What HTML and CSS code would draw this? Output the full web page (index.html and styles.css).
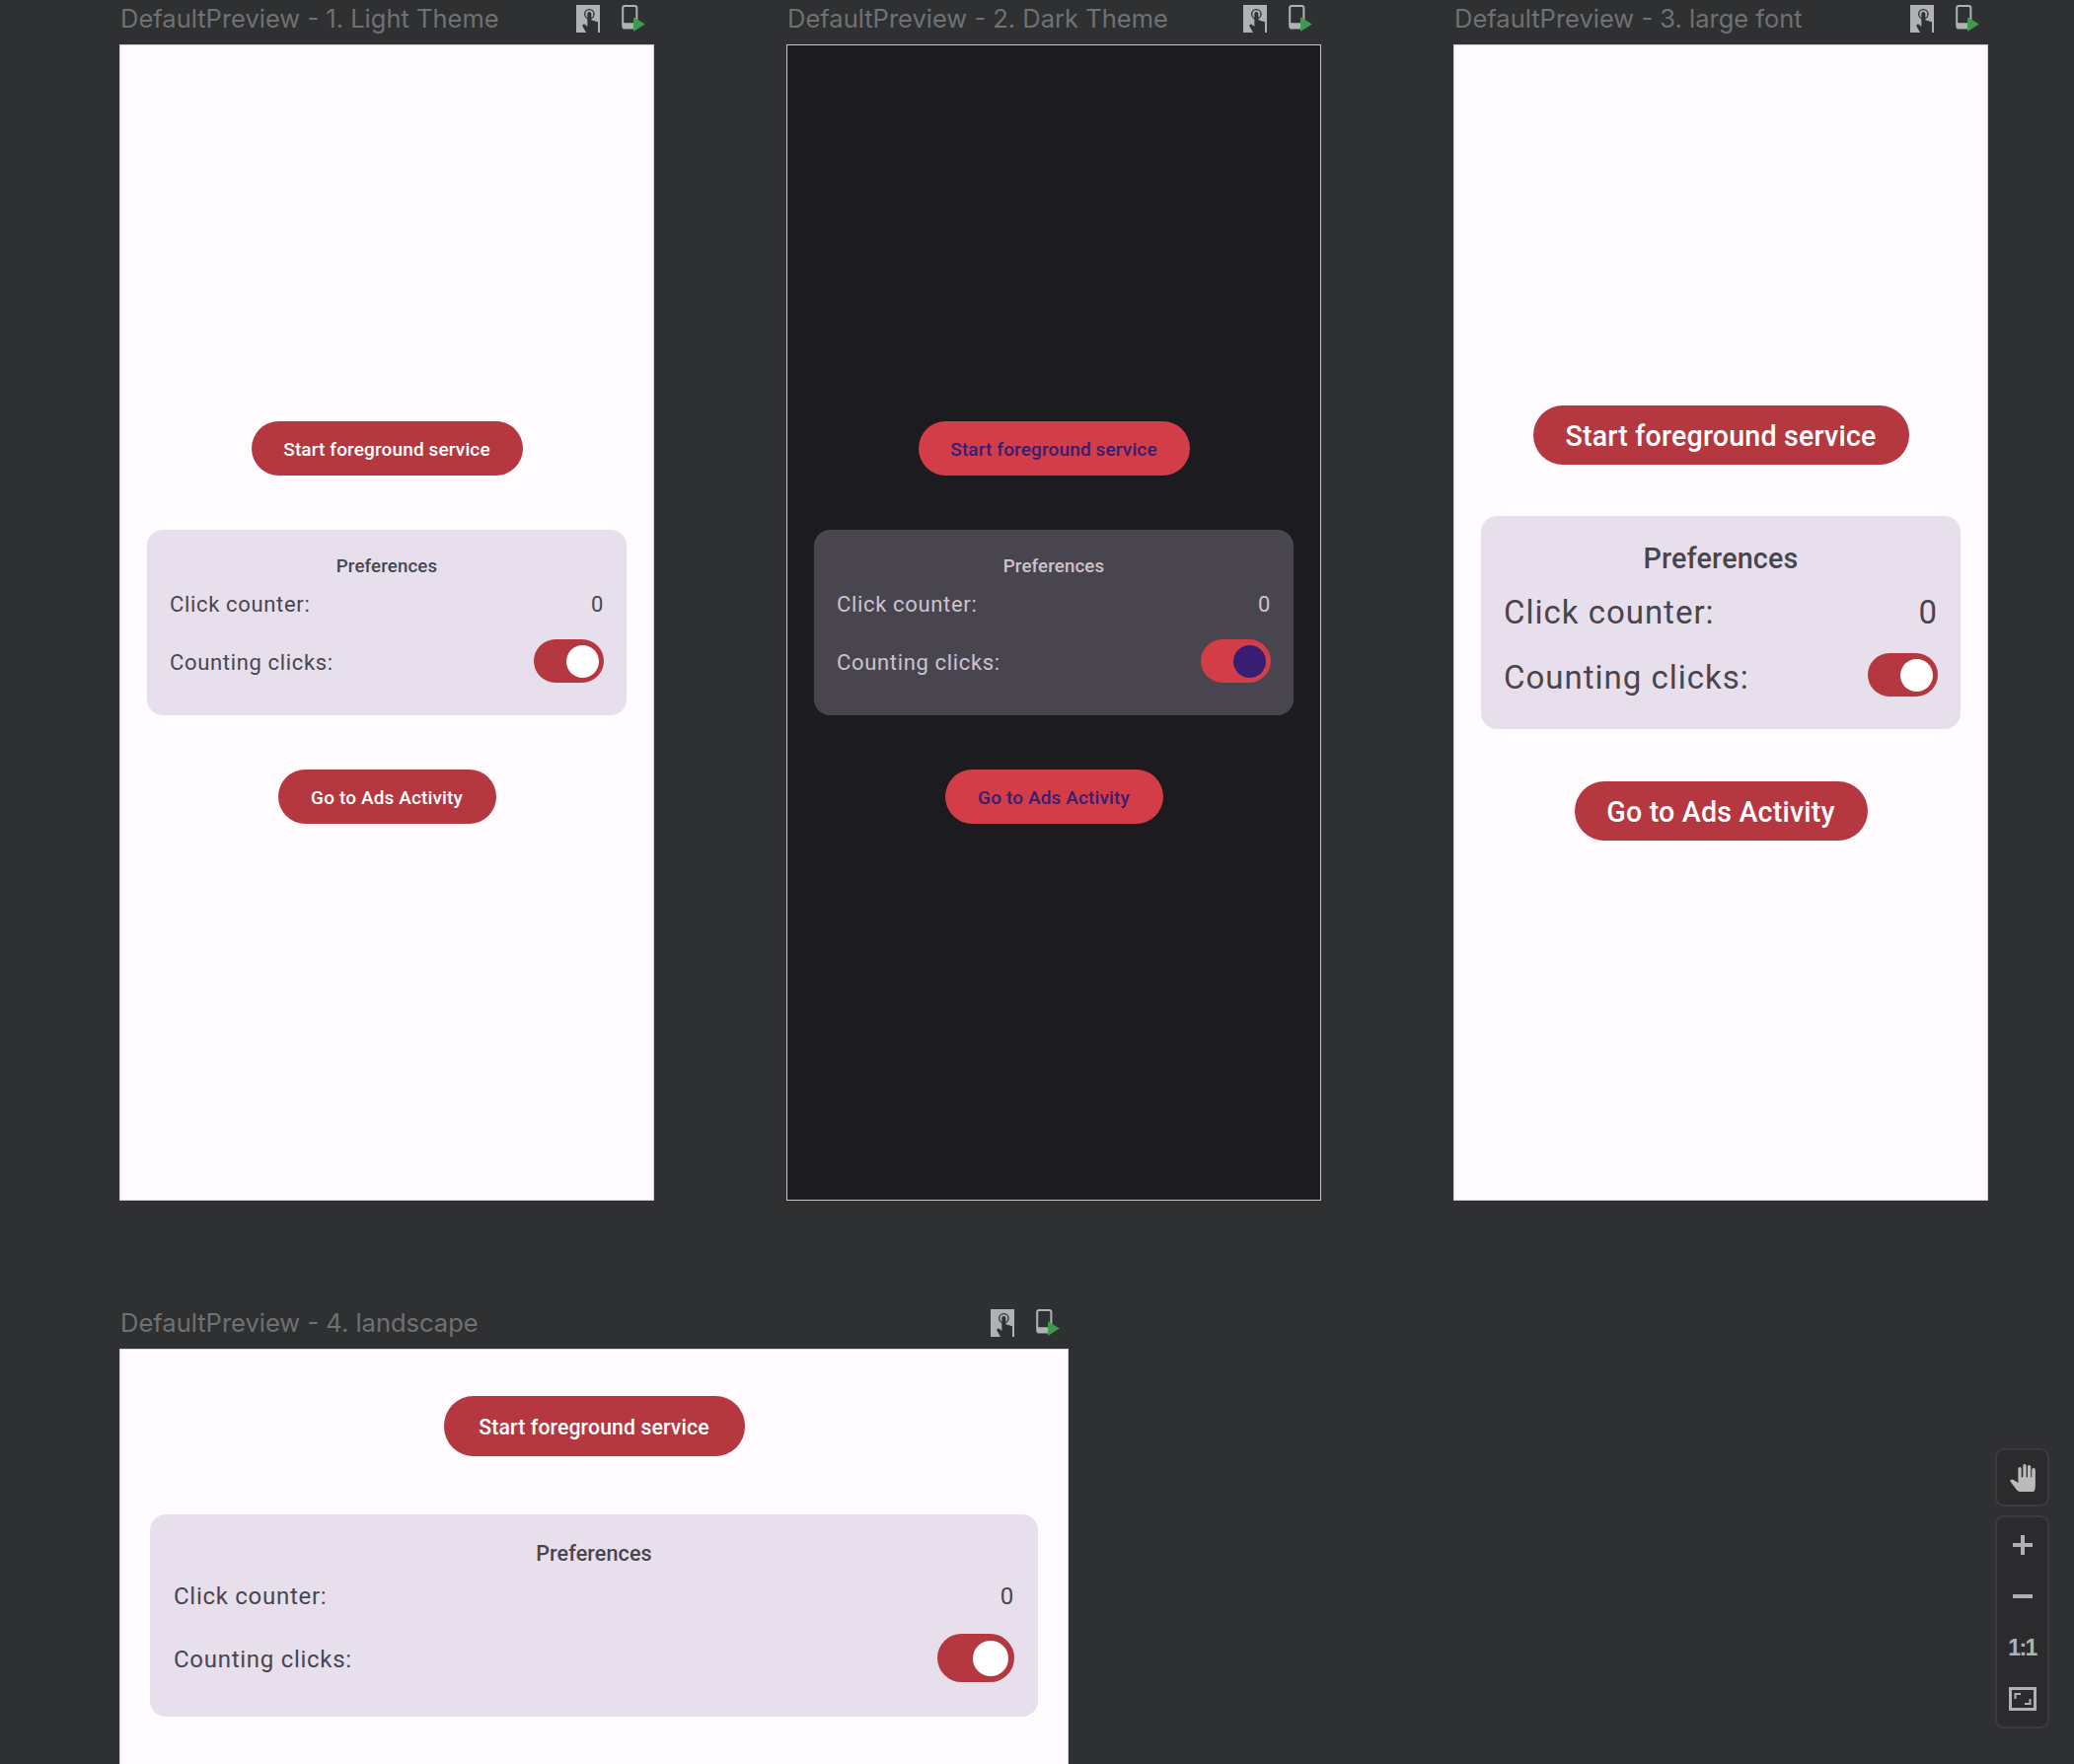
FILE: index.html
```html
<!DOCTYPE html>
<html lang="en">
<head>
  <meta charset="UTF-8">
  <meta name="viewport" content="width=device-width, initial-scale=1.0">
  <title>Compose Previews</title>
  <link rel="stylesheet" href="styles.css">
</head>
<body>
  <svg class="defs" width="0" height="0" aria-hidden="true">
    <symbol id="icon-interact" viewBox="0 0 72 84">
      <rect width="72" height="84" fill="#afb1b3"/>
      <circle cx="40" cy="28" r="14" fill="none" stroke="#2f3032" stroke-width="4"/>
      <path d="M34 27a6 6 0 0 1 12 0V46L66 52V84H30L18 62L24 58L34 66Z" fill="#2f3032"/>
    </symbol>
    <symbol id="icon-run" viewBox="0 0 70 80">
      <rect x="3" y="3" width="42" height="66" rx="6" fill="none" stroke="#afb1b3" stroke-width="6"/>
      <rect x="3" y="54" width="33" height="18" fill="#afb1b3"/>
      <path d="M35 36L70 58L35 80Z" fill="#3d9a50"/>
    </symbol>
  </svg>

  <main class="canvas">
    <section class="preview">
      <div class="preview-head">
        <span class="preview-title">DefaultPreview - 1. Light Theme</span>
        <div class="preview-icons">
          <svg class="icon-interact"><use href="#icon-interact"/></svg>
          <svg class="icon-run"><use href="#icon-run"/></svg>
        </div>
      </div>
      <div class="screen">
        <button class="action start">Start foreground service</button>
        <div class="card">
          <div class="card-title">Preferences</div>
          <div class="row row-counter"><span>Click counter:</span><span>0</span></div>
          <div class="row row-toggle"><span class="row-label">Counting clicks:</span><span class="toggle"><span class="thumb"></span></span></div>
        </div>
        <button class="action ads">Go to Ads Activity</button>
      </div>
    </section>

    <section class="preview">
      <div class="preview-head">
        <span class="preview-title">DefaultPreview - 2. Dark Theme</span>
        <div class="preview-icons">
          <svg class="icon-interact"><use href="#icon-interact"/></svg>
          <svg class="icon-run"><use href="#icon-run"/></svg>
        </div>
      </div>
      <div class="screen dark">
        <button class="action start">Start foreground service</button>
        <div class="card">
          <div class="card-title">Preferences</div>
          <div class="row row-counter"><span>Click counter:</span><span>0</span></div>
          <div class="row row-toggle"><span class="row-label">Counting clicks:</span><span class="toggle"><span class="thumb"></span></span></div>
        </div>
        <button class="action ads">Go to Ads Activity</button>
      </div>
    </section>

    <section class="preview">
      <div class="preview-head">
        <span class="preview-title">DefaultPreview - 3. large font</span>
        <div class="preview-icons">
          <svg class="icon-interact"><use href="#icon-interact"/></svg>
          <svg class="icon-run"><use href="#icon-run"/></svg>
        </div>
      </div>
      <div class="screen large">
        <button class="action start">Start foreground service</button>
        <div class="card">
          <div class="card-title">Preferences</div>
          <div class="row row-counter"><span>Click counter:</span><span>0</span></div>
          <div class="row row-toggle"><span class="row-label">Counting clicks:</span><span class="toggle"><span class="thumb"></span></span></div>
        </div>
        <button class="action ads">Go to Ads Activity</button>
      </div>
    </section>

    <section class="preview preview-wide">
      <div class="preview-head">
        <span class="preview-title">DefaultPreview - 4. landscape</span>
        <div class="preview-icons">
          <svg class="icon-interact"><use href="#icon-interact"/></svg>
          <svg class="icon-run"><use href="#icon-run"/></svg>
        </div>
      </div>
      <div class="screen landscape">
        <button class="action start">Start foreground service</button>
        <div class="card">
          <div class="card-title">Preferences</div>
          <div class="row row-counter"><span>Click counter:</span><span>0</span></div>
          <div class="row row-toggle"><span class="row-label">Counting clicks:</span><span class="toggle"><span class="thumb"></span></span></div>
        </div>
      </div>
    </section>
  </main>

  <aside class="toolbar">
    <div class="tool-group">
      <div class="tool tool-hand">
        <svg width="26" height="28" viewBox="0 0 78 85"><path d="M25 45V14a5 5 0 0 1 10 0V40h5V5a5 5 0 0 1 10 0V40h4V8a5 5 0 0 1 10 0V40h3V18a5.500 5.500 0 0 1 11 0V65q0 20-8 20H30q-5 0-10-6L0 52q3-7 10-4L25 58Z" fill="#bbbbbb"/></svg>
      </div>
    </div>
    <div class="tool-group">
      <div class="tool">
        <svg width="20" height="20" viewBox="0 0 20 20"><path d="M8 0h4v8h8v4h-8v8H8v-8H0V8h8Z" fill="#afb1b3"/></svg>
      </div>
      <div class="tool">
        <svg width="20" height="4" viewBox="0 0 20 4"><rect width="20" height="4" fill="#afb1b3"/></svg>
      </div>
      <div class="tool tool-ratio">1:1</div>
      <div class="tool">
        <svg width="28" height="24" viewBox="0 0 28 24" fill="none" stroke="#afb1b3"><rect x="1.500" y="1.500" width="25" height="21" stroke-width="3"/><path d="M6.500 12V7H12M21.500 12v5H16" stroke-width="2"/></svg>
      </div>
    </div>
  </aside>
</body>
</html>
```

FILE: styles.css
```css
html, body {
  height: 1788px;
  margin: 0;
  overflow: hidden;
}

body {
  position: relative;
  background-color: #2f3032;
  font-family: Roboto, sans-serif;
}

.defs {
  display: block;
  height: 0;
}

.canvas {
  display: grid;
  grid-template-columns: 542px 542px 542px;
  column-gap: 134px;
  row-gap: 105px;
  padding-left: 121px;
}

.preview-wide {
  grid-column: span 2;
  width: 962px;
}

.preview-head {
  display: flex;
  align-items: center;
  justify-content: space-between;
  height: 45px;
  padding: 0 9px 8px 1px;
  box-sizing: border-box;
}

.preview-title {
  font-family: Inter, sans-serif;
  font-size: 25.500px;
  color: #6f7173;
}

.preview-icons {
  display: flex;
  align-items: center;
  gap: 22px;
}

.icon-interact {
  width: 24px;
  height: 28px;
}

.icon-run {
  width: 24px;
  height: 27px;
}

/* phone frames */
.screen {
  display: flex;
  flex-direction: column;
  align-items: center;
  justify-content: center;
  height: 1172px;
  box-sizing: border-box;
  background-color: #fffbfe;
  border: 1px solid #d5d3d6;
  color: #49454f;
}

.action {
  border: none;
  border-radius: 30px;
  padding: 2px 0 0;
  height: 55px;
  background-color: #b53841;
  color: #fff;
  font-family: Roboto, sans-serif;
  font-weight: 500;
  font-size: 19px;
  letter-spacing: 0.130px;
}

.action.start {
  width: 275px;
}

.action.ads {
  width: 221px;
}

.card {
  align-self: stretch;
  margin: 55px 27px;
  padding: 23px 23px 33px;
  background-color: #e7e0ec;
  border-radius: 16px;
}

.card-title {
  height: 26px;
  line-height: 28px;
  text-align: center;
  font-size: 18.700px;
  font-weight: 500;
  letter-spacing: 0.130px;
}

.row {
  display: flex;
  align-items: center;
  justify-content: space-between;
  font-size: 22px;
  letter-spacing: 0.660px;
}

.row-counter {
  height: 32px;
  margin-top: 10px;
}

.row-toggle {
  height: 44px;
  margin-top: 20px;
}

.row-label {
  padding-top: 3px;
}

.toggle {
  display: flex;
  align-items: center;
  justify-content: flex-end;
  width: 71px;
  height: 44px;
  padding-right: 5px;
  box-sizing: border-box;
  border-radius: 22px;
  background-color: #b53841;
}

.thumb {
  width: 33px;
  height: 33px;
  border-radius: 50%;
  background-color: #fff;
}

/* dark theme */
.dark {
  background-color: #1c1b1f;
  border-color: #c8c8c8;
  color: #cac4d0;
}

.dark .action {
  background-color: #d23d48;
  color: #381e72;
}

.dark .card {
  background-color: #49454f;
}

.dark .toggle {
  background-color: #d23d48;
}

.dark .thumb {
  background-color: #381e72;
}

/* large font */
.large {
  padding-top: 1px;
}

.large .action {
  height: 60px;
  font-size: 28.600px;
  letter-spacing: 0.190px;
}

.large .action.start {
  width: 381px;
}

.large .action.ads {
  width: 297px;
}

.large .card {
  margin: 52px 27px 53px;
}

.large .card-title {
  height: 40px;
  line-height: 40px;
  font-size: 28.700px;
  letter-spacing: 0.190px;
}

.large .row {
  font-size: 33px;
  letter-spacing: 0.990px;
}

.large .row-counter {
  height: 40px;
  margin-top: 12px;
  padding-top: 2px;
}

.large .row-toggle {
  margin-top: 22px;
}

.large .row-label {
  padding-top: 4px;
}

/* landscape */
.landscape {
  justify-content: flex-start;
  height: 542px;
  padding-top: 47px;
}

.landscape .action {
  height: 61px;
  font-size: 21.200px;
  letter-spacing: 0.140px;
}

.landscape .action.start {
  width: 305px;
}

.landscape .card {
  margin: 59px 30px 0;
  padding: 25px 24px 35px;
}

.landscape .card-title {
  height: 30px;
  line-height: 30px;
  font-size: 21.500px;
}

.landscape .row {
  font-size: 24px;
  letter-spacing: 0.720px;
}

.landscape .row-counter {
  height: 35px;
}

.landscape .row-toggle {
  height: 49px;
  margin-top: 21px;
}

.landscape .row-label {
  padding-top: 3px;
}

.landscape .toggle {
  width: 78px;
  height: 49px;
  padding-right: 6px;
  border-radius: 25px;
}

.landscape .thumb {
  width: 36px;
  height: 36px;
}

/* zoom controls, floating over the canvas */
.toolbar {
  position: absolute;
  left: 2022px;
  top: 1468px;
  display: flex;
  flex-direction: column;
  gap: 9px;
}

.tool-group {
  width: 55px;
  box-sizing: border-box;
  padding: 2px 0;
  background-color: #2b2b2d;
  border: 2px solid #3a3c3e;
  border-radius: 9px;
}

.tool {
  display: flex;
  align-items: center;
  justify-content: center;
  height: 52px;
}

.tool-hand {
  height: 51px;
}

.tool-ratio {
  font-family: "Liberation Sans", sans-serif;
  font-weight: 700;
  font-size: 23px;
  letter-spacing: -1.500px;
  color: #afb1b3;
}
```
